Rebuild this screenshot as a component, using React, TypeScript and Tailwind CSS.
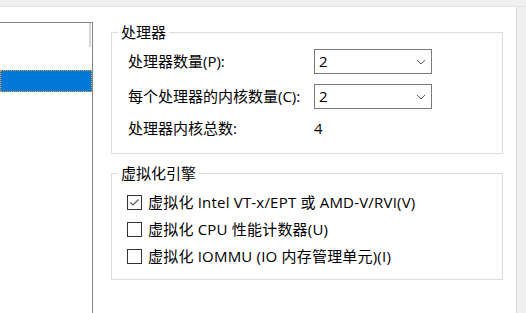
import React from 'react'

const font = { fontFamily: '"Open Sans", "Noto Sans CJK SC", sans-serif' }

function Combo({ value }: { value: string }) {
  return (
    <div className="flex h-[25px] w-[118px] items-center justify-between border border-[#7a7a7a] bg-white pl-[4px] pr-[5px]">
      <span>{value}</span>
      <svg width="10" height="6" viewBox="0 0 10 6">
        <path d="M1 1 L5 5 L9 1" fill="none" stroke="#5a5a5a" strokeWidth="1" />
      </svg>
    </div>
  )
}

function Check({ checked, label }: { checked?: boolean; label: string }) {
  return (
    <div className="flex h-[27px] items-center gap-[6px]">
      <div className="flex h-[15px] w-[15px] items-center justify-center border border-[#333] bg-white">
        {checked && (
          <svg width="13" height="13" viewBox="0 0 13 13">
            <path d="M2.5 6.5 L5 9 L10.5 3.5" fill="none" stroke="#555" strokeWidth="1.2" />
          </svg>
        )}
      </div>
      <span className="tracking-[0.2px]">{label}</span>
    </div>
  )
}

function Group({ title, children, className }: { title: string; children: React.ReactNode; className?: string }) {
  return (
    <div className={'relative border border-[#dcdcdc] ' + (className ?? '')}>
      <span className="absolute left-[6px] top-[-11px] bg-white px-[3px] leading-[20px]">{title}</span>
      {children}
    </div>
  )
}

export default function App() {
  return (
    <div className="flex h-[313px] w-[526px] flex-col overflow-hidden bg-[#f0f0f0] text-[15px] text-black" style={font}>
      <div className="h-[7px] shrink-0 border-b border-[#e3e3e3]" />
      <div className="flex flex-1">
        <div className="flex w-[517px] border-r border-[#dadada] bg-white">
          {/* Device list */}
          <div className="mt-[15px] w-[93px] shrink-0 border-t border-r border-[#7f858c]">
            <div className="flex justify-end pr-[1px]">
              <div className="h-[24px] w-[2px] bg-[#d6d6d6]" />
            </div>
            <div className="mt-[23px] h-[22px] w-[92px] border border-dotted border-[#f0a030] bg-[#0078d7]" />
          </div>

          {/* Settings */}
          <div className="ml-[18px] flex w-[392px] flex-col pt-[25px]">
            <Group title="处理器" className="h-[122px] pl-[16px] pt-[16px]">
              <div className="flex h-[25px] items-center">
                <span className="w-[186px]">处理器数量(P):</span>
                <Combo value="2" />
              </div>
              <div className="mt-[10px] flex h-[25px] items-center">
                <span className="w-[186px]">每个处理器的内核数量(C):</span>
                <Combo value="2" />
              </div>
              <div className="mt-[9px] flex h-[20px] items-center">
                <span className="w-[186px]">处理器内核总数:</span>
                <span>4</span>
              </div>
            </Group>

            <Group title="虚拟化引擎" className="mt-[19px] h-[107px] pl-[15px] pt-[15px]">
              <Check checked label="虚拟化 Intel VT-x/EPT 或 AMD-V/RVI(V)" />
              <Check label="虚拟化 CPU 性能计数器(U)" />
              <Check label="虚拟化 IOMMU (IO 内存管理单元)(I)" />
            </Group>
          </div>
        </div>
      </div>
    </div>
  )
}
